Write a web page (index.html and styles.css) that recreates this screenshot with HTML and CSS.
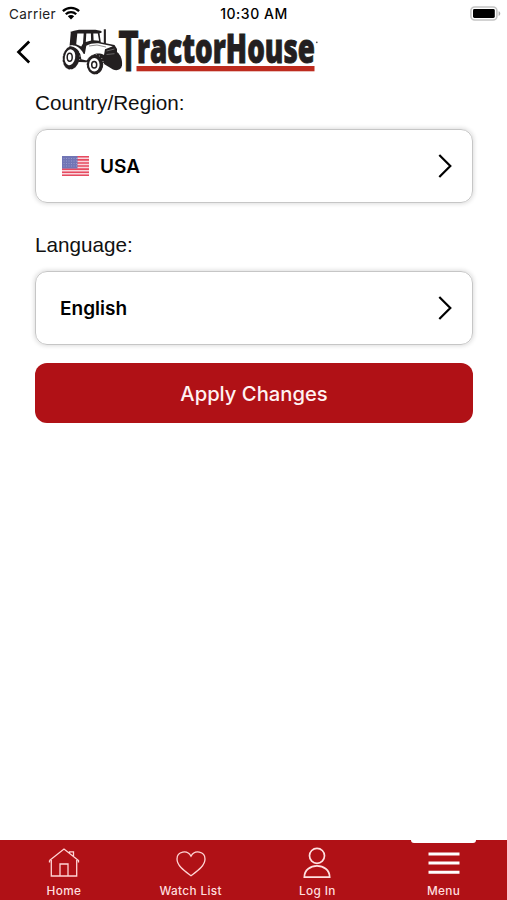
FILE: index.html
```html
<!DOCTYPE html>
<html lang="en">
<head>
<meta charset="utf-8">
<title>TractorHouse</title>
<link rel="stylesheet" href="styles.css">
</head>
<body>
<div class="app">
  <div class="status">
    <div class="carrier"><span class="carrier-name">Carrier</span>
      <svg class="wifi" width="18" height="14" viewBox="0 0 18 14"><g fill="none" stroke="#000" stroke-width="2.3"><path d="M.9 5.1a11.6 11.6 0 0 1 16.2 0"/><path d="M3.8 8.2a7.4 7.4 0 0 1 10.4 0"/></g><path d="M9 13.4 5.8 10.2a4.6 4.6 0 0 1 6.4 0z"/></svg>
    </div>
    <span class="time">10:30 AM</span>
    <svg class="battery" width="31" height="16" viewBox="0 0 31 16"><rect x=".9" y="1" width="26" height="13" rx="3.8" fill="#fff" stroke="#c4c4c4" stroke-width="1.6"/><rect x="3" y="3.1" width="21.8" height="8.8" rx="1.4"/><path d="M28.6 5.2c2.2.7 2.2 4 0 4.7z" fill="#aaa"/></svg>
  </div>
  <header class="header">
    <svg class="back" width="16" height="26" viewBox="0 0 16 26"><path d="M13.2 2.5 2.5 13l10.7 10.5" fill="none" stroke="#000" stroke-width="2.7"/></svg>
    <svg class="logo" width="260" height="50" viewBox="60 26 260 50">
      <g fill="#231f20">
        <path d="M74 30.800 79 29.700h16.500l6 1.200v1.800l-2 .5 1.300 9 13.700 2.800 2.500 4v10l-12 4-26-1-10-10 1.800-19.800-.8-.2z"/>
        <path d="M103.800 29.300h2.100V44h-2.100z"/>
        <ellipse cx="71.300" cy="57.600" rx="8.600" ry="12" transform="rotate(10 71.300 57.600)"/>
        <ellipse cx="95" cy="64.500" rx="8.300" ry="10"/>
        <path d="M105 52h12c4 3 5.500 8.500 5 13.500-.8 4.500-5 5.500-9 4L104 64z"/>
      </g>
      <g fill="#fff">
        <path d="M77.300 33.600h6.400l-.7 9.800-1.800 3-5-2.200zM86.300 33.600h4.600l.2 7-5.300 1.500zM93.300 33.600h4.500l1.300 7.200-5.500-.6z"/>
        <path d="M68 46c6-2.200 12.500 1.200 15.500 7.800l1.300.2 1.500-8.200c3-2 7.500-2.700 12-2.500l14.500 2.900-7.800 3-1 5.800c-5.500-3-13.500-1.500-17.500 5.600l-5.200-1.400C81 51.500 76.500 46.300 68 46z"/>
        <ellipse cx="70" cy="57.300" rx="5.200" ry="8" transform="rotate(10 70 57.300)"/>
        <ellipse cx="94.300" cy="64.700" rx="5.300" ry="6.700"/>
      </g>
      <g fill="none" stroke="#231f20">
        <ellipse cx="69.700" cy="57.300" rx="2.500" ry="4" stroke-width="1.500"/>
        <ellipse cx="94.200" cy="64.800" rx="2.500" ry="3.300" stroke-width="1.500"/>
        <path d="M89 46 97 45l9 2" stroke-width=".5"/>
        <ellipse cx="71.300" cy="57.600" rx="8.600" ry="12" stroke="#fff" stroke-width=".7" stroke-dasharray="1 2.600" transform="rotate(10 71.300 57.600)"/>
        <ellipse cx="95" cy="64.500" rx="8.400" ry="10.100" stroke="#fff" stroke-width=".7" stroke-dasharray="1 2.400"/>
      </g>
      <path d="m106.500 51 8-2M106.500 54.500l8-.8" stroke="#aaa" stroke-width=".5"/>
      <text class="initial" x="118.800" y="70.500" textLength="19.500" lengthAdjust="spacingAndGlyphs">T</text>
      <text class="word" x="137" y="63" textLength="178" lengthAdjust="spacingAndGlyphs">ractorHouse</text>
      <rect x="136.500" y="66" width="178" height="5.300" fill="#bd2b1e"/>
      <circle cx="316.800" cy="42.300" r=".9" fill="#555"/>
    </svg>
  </header>
  <main class="form">
    <div class="label">Country/Region:</div>
    <div class="picker">
      <svg class="flag" width="27" height="20" viewBox="0 0 27 20"><rect width="27" height="20" fill="#f9d5dc"/><path d="M0 .8h27M0 3.900h27M0 7h27M0 10h27M0 13.100h27M0 16.200h27M0 19.200h27" stroke="#e64b60" stroke-width="1.600"/><rect width="15.500" height="12.500" fill="#7175b5"/><path d="M1.500 2.500H15M1.500 5H15M1.500 7.500H15M1.500 10H15" stroke="#a0a3d0" stroke-width=".8" stroke-dasharray="1 1.500"/></svg>
      <span class="value">USA</span>
      <svg class="chevron" width="16" height="26" viewBox="0 0 16 26"><path d="M2.300 2 13.300 13l-11 11" fill="none" stroke="#000" stroke-width="2.200"/></svg>
    </div>
    <div class="label second">Language:</div>
    <div class="picker">
      <span class="value">English</span>
      <svg class="chevron" width="16" height="26" viewBox="0 0 16 26"><path d="M2.300 2 13.300 13l-11 11" fill="none" stroke="#000" stroke-width="2.200"/></svg>
    </div>
    <button class="apply">Apply Changes</button>
  </main>
  <nav class="tabs">
    <div class="tab"><svg width="34" height="34" viewBox="0 0 34 34"><g fill="none" stroke="#ffd5d5" stroke-width="1.300"><path d="M2.500 14.500 17 3l14.500 11.500v2M2.500 14.500v2M4.300 14v16h25.400V14M13 30V18h8v12M22.500 7V5.800h4V10"/></g></svg><span class="tab-label">Home</span></div>
    <div class="tab"><svg width="34" height="34" viewBox="0 0 34 34"><path d="M17 29.700C11 25.200 3 20 3 13c0-8 10.500-9.500 14-2.800C20.500 3.500 31 5 31 13c0 7-8 12.200-14 16.700z" fill="none" stroke="#ffd5d5" stroke-width="1.300"/></svg><span class="tab-label">Watch List</span></div>
    <div class="tab"><svg width="34" height="34" viewBox="0 0 34 34"><g fill="none" stroke="#ffe1e1" stroke-width="1.700"><circle cx="17" cy="9.800" r="7.500"/><path d="M4.300 31.200c0-15 25.400-15 25.400 0z"/></g></svg><span class="tab-label">Log In</span></div>
    <div class="tab active"><svg width="34" height="34" viewBox="0 0 34 34"><path d="M1.500 8h31M1.500 17h31M1.500 26.200h31" stroke="#fff" stroke-width="3"/></svg><span class="tab-label">Menu</span></div>
  </nav>
</div>
</body>
</html>
```
FILE: styles.css
```css
* { box-sizing: border-box; }
body { margin: 0; background: #fff; font-family: Inter, sans-serif; color: #000; }
.app { height: 900px; display: flex; flex-direction: column; overflow: hidden; }
.status { height: 26px; display: grid; grid-template-columns: 1fr auto 1fr; align-items: center; padding: 2px 6px 0 9px; font-size: 13.5px; }
.carrier { display: flex; align-items: center; gap: 6px; }
.carrier-name { color: #222; letter-spacing: .4px; }
.wifi { margin-top: -2px; }
.time { font-weight: 500; font-size: 14px; line-height: 14px; letter-spacing: .55px; margin: 0 2px 0 0; }
.battery { justify-self: end; margin-top: -1px; }
.header { height: 56px; display: flex; align-items: flex-start; padding-left: 16px; }
.back { margin-top: 13px; }
.logo { margin-left: 28px; overflow: visible; }
.word, .initial { fill: #231f20; stroke: #231f20; }
.word { font-family: "Open Sans", sans-serif; font-weight: 800; font-size: 41px; stroke-width: .9px; }
.initial { font-family: "Liberation Sans", sans-serif; font-weight: 700; font-size: 56.5px; stroke-width: 1.1px; }
.form { flex: 1; padding: 8px 34px 0 35px; }
.label { font-family: "Liberation Sans", sans-serif; font-size: 20.7px; line-height: 26px; height: 39px; color: #111; }
.label.second { margin-top: 29px; }
.picker { height: 74px; display: flex; align-items: center; border: 1px solid #c6c6c6; border-radius: 12px; padding: 0 19px 0 24px; box-shadow: 0 0 4px 1px #ddd; }
.flag { margin: 0 11px 0 2px; }
.value { font-size: 19px; font-weight: 600; }
.chevron { margin-left: auto; }
.apply { display: block; width: 100%; height: 60px; margin-top: 18px; border: 0; border-radius: 12px; background: #b01116; color: #fff2f2; font: 500 20.2px Inter, sans-serif; }
.tabs { height: 60px; display: grid; grid-template-columns: repeat(4, 1fr); background: #b01116; }
.tab { display: flex; flex-direction: column; align-items: center; padding: 6px 0 0 1px; position: relative; }
.tab-label { font-size: 11.8px; line-height: 16px; font-weight: 500; letter-spacing: .35px; margin-top: 3px; color: #ffdede; }
.active { padding-left: 0; }
.active::before { content: ""; position: absolute; top: 0; left: 31px; width: 65px; height: 3px; background: #fff; border-radius: 0 0 3px 3px; }
```
